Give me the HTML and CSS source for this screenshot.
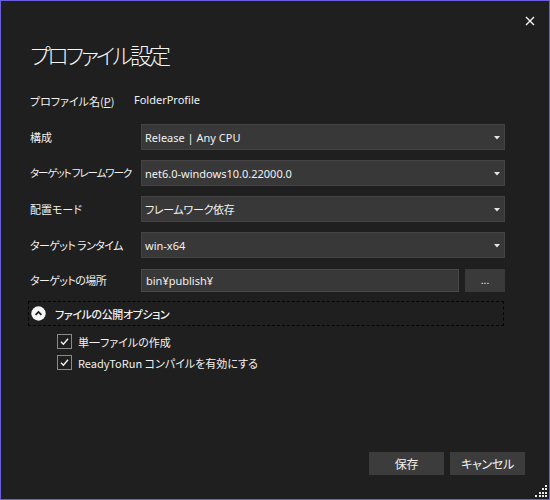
FILE: index.html
```html
<!DOCTYPE html>
<html lang="ja">
<head>
<meta charset="utf-8">
<link rel="stylesheet" href="styles.css">
</head>
<body>
<div class="dialog">
  <div class="titlebar">
    <svg class="close" width="10" height="10" viewBox="0 0 10 10"><path d="M1 1 L9 9 M9 1 L1 9" stroke="#f2f2f2" stroke-width="1.4" fill="none"/></svg>
  </div>
  <h1 class="title">プロファイル設定</h1>
  <div class="form">
    <div class="label name-label">プロファイル名(<u>P</u>)</div>
    <div class="value name-value">FolderProfile</div>

    <div class="label">構成</div>
    <div class="combo"><span>Release | Any CPU</span><svg class="arrow" width="6" height="4" viewBox="0 0 6 4"><path d="M0 0 H6 L3 3.5 Z" fill="#e6e6e6"/></svg></div>

    <div class="label tighter">ターゲット フレームワーク</div>
    <div class="combo"><span>net6.0-windows10.0.22000.0</span><svg class="arrow" width="6" height="4" viewBox="0 0 6 4"><path d="M0 0 H6 L3 3.5 Z" fill="#e6e6e6"/></svg></div>

    <div class="label">配置モード</div>
    <div class="combo"><span class="jp">フレームワーク依存</span><svg class="arrow" width="6" height="4" viewBox="0 0 6 4"><path d="M0 0 H6 L3 3.5 Z" fill="#e6e6e6"/></svg></div>

    <div class="label tight">ターゲット ランタイム</div>
    <div class="combo"><span>win-x64</span><svg class="arrow" width="6" height="4" viewBox="0 0 6 4"><path d="M0 0 H6 L3 3.5 Z" fill="#e6e6e6"/></svg></div>

    <div class="label tight">ターゲットの場所</div>
    <div class="loc">
      <div class="textbox">bin¥publish¥</div>
      <div class="browse">...</div>
    </div>
  </div>

  <div class="expander">
    <svg class="exp-icon" width="15" height="15" viewBox="0 0 15 15"><circle cx="7.5" cy="7.5" r="7.2" fill="#f5f5f5"/><path d="M4.6 8.8 L7.5 5.9 L10.4 8.8" stroke="#1f1f1f" stroke-width="1.8" fill="none"/></svg>
    <span>ファイルの公開オプション</span>
  </div>

  <div class="checks">
    <label class="check"><span class="box"><svg width="11" height="11" viewBox="0 0 11 11"><path d="M2 5.8 L4.4 8.2 L9 2.8" stroke="#f2f2f2" stroke-width="1.4" fill="none"/></svg></span><span>単一ファイルの作成</span></label>
    <label class="check"><span class="box"><svg width="11" height="11" viewBox="0 0 11 11"><path d="M2 5.8 L4.4 8.2 L9 2.8" stroke="#f2f2f2" stroke-width="1.4" fill="none"/></svg></span><span>ReadyToRun コンパイルを有効にする</span></label>
  </div>

  <div class="buttons">
    <div class="btn">保存</div>
    <div class="btn">キャンセル</div>
  </div>

  <svg class="grip" width="14" height="14" viewBox="0 0 14 14">
    <g fill="#e8e8e8">
      <rect x="11" y="1" width="2" height="2"/>
      <rect x="8" y="4" width="2" height="2"/><rect x="11" y="4" width="2" height="2"/>
      <rect x="5" y="8" width="2" height="2"/><rect x="8" y="8" width="2" height="2"/><rect x="11" y="8" width="2" height="2"/>
      <rect x="1" y="11" width="2" height="2"/><rect x="5" y="11" width="2" height="2"/><rect x="8" y="11" width="2" height="2"/><rect x="11" y="11" width="2" height="2"/>
    </g>
  </svg>
</div>
</body>
</html>
```

FILE: styles.css
```css
* { box-sizing: border-box; }
html, body { margin: 0; padding: 0; background: #1f1f1f; }
body {
  font-family: "Noto Sans CJK JP", "Noto Sans", sans-serif;
  font-size: 11px;
  color: #f1f1f1;
  font-feature-settings: "palt";
}
.dialog {
  position: relative;
  width: 550px;
  height: 500px;
  border: 1px solid #6b5ee0;
  background: #1f1f1f;
  padding: 0 44px 0 29px;
}
.titlebar {
  height: 37px;
  display: flex;
  justify-content: flex-end;
  align-items: flex-start;
  padding-top: 15px;
  margin-right: -30px;
}
.close { display: block; }
.title {
  margin: 0;
  font-size: 22px;
  font-weight: 300;
  line-height: 32px;
  height: 34px;
  color: #f4f4f4;
  letter-spacing: -3px;
}
.form {
  display: grid;
  grid-template-columns: 111px 364px;
  row-gap: 10px;
  margin-top: 20px;
  align-items: center;
}
.label { line-height: 18px; white-space: nowrap; }
.tight { letter-spacing: -0.6px; }
.tighter { letter-spacing: -1.1px; font-size: 10.5px; }
.name-label, .name-value { height: 18px; margin-bottom: 4px; }
.name-value { margin-left: -7px; font-family: "Noto Sans", sans-serif; }
.combo {
  height: 26px;
  background: #383838;
  border: 1px solid #434343;
  display: flex;
  align-items: center;
  justify-content: space-between;
  padding: 0 4px 0 3px;
}
.combo span, .textbox { font-family: "Noto Sans", "Noto Sans CJK JP", sans-serif; }
.combo span.jp { font-family: "Noto Sans CJK JP", sans-serif; letter-spacing: -0.3px; }
.arrow { display: block; margin-top: 1px; }
.loc { display: flex; gap: 6px; margin-top: 1px; }
.textbox {
  width: 318px;
  height: 23px;
  background: #383838;
  border: 1px solid #484848;
  line-height: 21px;
  padding-left: 4px;
}
.browse {
  width: 40px;
  height: 23px;
  background: #3a3a3a;
  text-align: center;
  line-height: 22px;
  font-size: 10px;
}
.expander {
  margin-top: 9px;
  margin-left: -2px;
  width: 476px;
  height: 25px;
  border: 1px dashed #050505;
  display: flex;
  align-items: center;
  padding-left: 2px;
  gap: 9px;
  font-weight: 500;
  letter-spacing: -0.4px;
}
.exp-icon { display: block; }
.checks {
  display: flex;
  flex-direction: column;
  gap: 6px;
  margin-top: 8px;
  padding-left: 27px;
}
.check { display: flex; align-items: center; gap: 6px; height: 15px; }
.box {
  width: 15px;
  height: 15px;
  border: 1px solid #8a8a8a;
  display: flex;
  align-items: center;
  justify-content: center;
}
.box svg { display: block; }
.buttons {
  position: absolute;
  right: 24px;
  bottom: 24px;
  display: flex;
  gap: 6px;
}
.btn {
  width: 75px;
  height: 23px;
  background: #3c3c3c;
  text-align: center;
  line-height: 23px;
  font-size: 12px;
  letter-spacing: -0.3px;
}
.grip { position: absolute; right: 1px; bottom: 1px; }
```
